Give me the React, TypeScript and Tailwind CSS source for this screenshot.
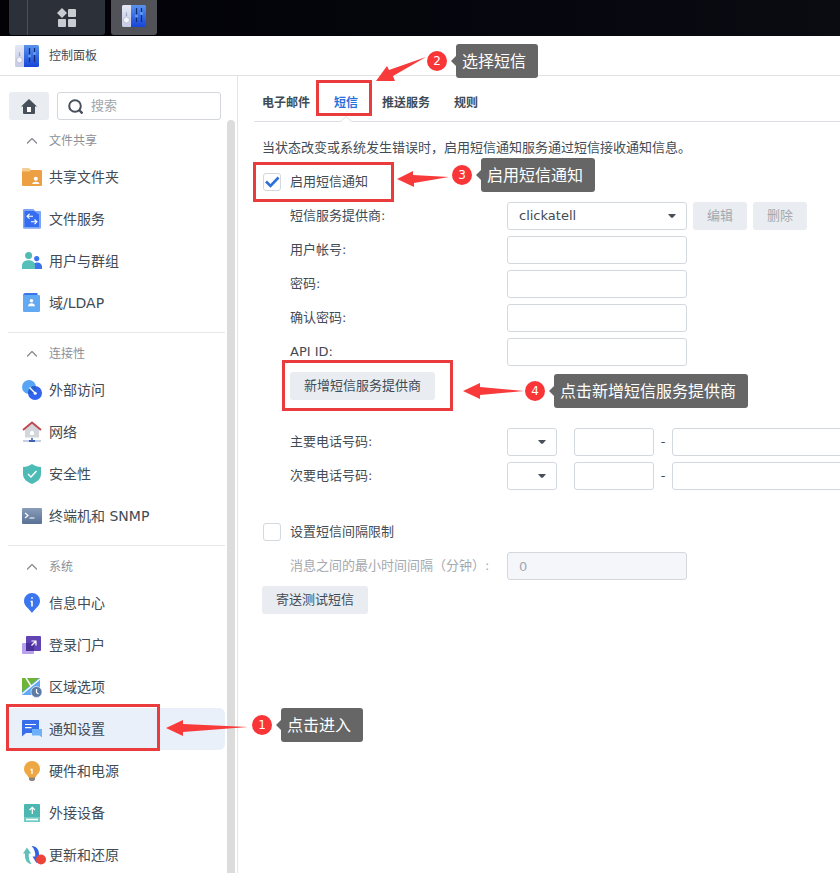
import { useState } from 'react';
import type { ReactNode } from 'react';

// ---------------------------------------------------------------------------
// Icons
// ---------------------------------------------------------------------------

function Icon({ children }: { children: ReactNode }) {
  return (
    <svg viewBox="0 0 20 20" className="h-5 w-5 shrink-0 overflow-visible" aria-hidden>
      {children}
    </svg>
  );
}

function ControlPanelIcon({ id }: { id: string }) {
  return (
    <svg viewBox="0 0 24 22" className="h-[22px] w-6 shrink-0" aria-hidden>
      <defs>
        <linearGradient id={`${id}-l`} x1="0" y1="0" x2="0" y2="1">
          <stop offset="0" stopColor="#e4e7f6" />
          <stop offset="1" stopColor="#c6cbe4" />
        </linearGradient>
        <linearGradient id={`${id}-r`} x1="0" y1="0" x2="0" y2="1">
          <stop offset="0" stopColor="#5a93ea" />
          <stop offset="1" stopColor="#1546d8" />
        </linearGradient>
      </defs>
      <path d="M1.500 0H9v22H1.500A1.500 1.500 0 0 1 0 20.500V1.500A1.500 1.500 0 0 1 1.500 0Z" fill={`url(#${id}-l)`} />
      <path d="M9 0h13.500A1.500 1.500 0 0 1 24 1.500v19a1.500 1.500 0 0 1-1.500 1.500H9Z" fill={`url(#${id}-r)`} />
      <circle cx="4.500" cy="15" r="3" fill="#f4f5fc" stroke="#aab0cc" strokeWidth="0.700" />
      <path d="M4.500 7v4M3.500 10h2" stroke="#9aa1be" strokeWidth="0.800" />
      <path d="M14.500 3v14M19.500 3v14" stroke="#102a78" strokeWidth="1.200" />
      <rect x="13" y="9.500" width="3" height="3" rx="1" fill="#5b9af5" />
      <rect x="18" y="7" width="3" height="3" rx="1" fill="#5b9af5" />
    </svg>
  );
}

const icons = {
  sharedFolder: (
    <Icon>
      <path d="M0 2.200Q0 1 1.200 1H7l2 2h9v3H0Z" fill="#f3cd92" />
      <path d="M0 4.500h7.500L9 3h9.800Q20 3 20 4.200v13.600q0 1.200-1.200 1.200H1.200Q0 19 0 17.800Z" fill="#eda043" />
      <circle cx="13.800" cy="11.800" r="2" fill="#fff" />
      <path d="M10.200 17c0-3 7.200-3 7.200 0Z" fill="#fff" />
    </Icon>
  ),
  fileServices: (
    <Icon>
      <path d="M1 1.200Q1 0 2.200 0h9l2 2H18q1 0 1 1v15.500q0 1.200-1.200 1.200H2.200Q1 19.700 1 18.500Z" fill="#7da4f6" />
      <path d="M2.500 2H12l5 3.500V18H2.500Z" fill="#356df0" />
      <path d="M7.500 5 5 7.300l2.500 2.400M5 7.300h6M12.500 10.500l2.500 2.300-2.500 2.400M15 12.800H9" fill="none" stroke="#fff" strokeWidth="1.100" />
    </Icon>
  ),
  userGroup: (
    <Icon>
      <circle cx="14.700" cy="7.600" r="2.600" fill="#3b74ec" />
      <path d="M11 18v-3c0-5 9-4.500 9 .800V18Z" fill="#3b74ec" />
      <circle cx="6.600" cy="4.500" r="3.500" fill="#52bab5" />
      <path d="M0 18v-3.500C0 7.500 13 7.500 13 14.500V18Z" fill="#56bfba" />
    </Icon>
  ),
  ldap: (
    <Icon>
      <path d="M1 2.500Q1 0 3 0h12.500v4H1Z" fill="#3974ea" />
      <path d="M1 2h15.800Q18 2 18 3.200v14.600q0 1.200-1.200 1.200H2.200Q1 19 1 17.800Z" fill="#62a9f4" />
      <circle cx="9.500" cy="7.800" r="1.800" fill="#fff" />
      <path d="M6 13.200c0-4 7-4 7 0Z" fill="#fff" />
    </Icon>
  ),
  externalAccess: (
    <Icon>
      <circle cx="7" cy="7" r="7" fill="#58a5f5" />
      <circle cx="13" cy="13" r="7" fill="#3265ee" />
      <path d="M6 13a7 7 0 0 1 7-7 7 7 0 0 1 1 1 7 7 0 0 1-7 7 7 7 0 0 1-1-1Z" fill="#2660cf" />
      <path d="m7.500 7.500 5.500 5.500" stroke="#fff" strokeWidth="1.400" />
      <circle cx="13.200" cy="13.200" r="1.500" fill="#fff" />
    </Icon>
  ),
  network: (
    <Icon>
      <path d="M3 7.500 10 1.500l7 6V15.500H3Z" fill="#d3d6da" />
      <path d="M1 8 10 .500 19 8" fill="none" stroke="#c34a55" strokeWidth="2.100" />
      <path d="m10 8.500 2 1.500v3H8v-3Z" fill="#fff" />
      <path d="M1 19h18" stroke="#b2bedb" strokeWidth="1.500" />
      <path d="M10 16v3" stroke="#3c63b6" strokeWidth="1.600" />
      <path d="M7 18h6v2H7Z" fill="#3c63b6" />
    </Icon>
  ),
  security: (
    <Icon>
      <path d="M10 0c3 2 6 3 9 3v7c0 5-4 8-9 10-5-2-9-5-9-10V3c3 0 6-1 9-3Z" fill="#4ebcb6" />
      <path d="m6 10 3 3 5.500-6" fill="none" stroke="#fff" strokeWidth="1.400" />
    </Icon>
  ),
  terminal: (
    <Icon>
      <defs>
        <linearGradient id="terminal-bg" x1="0" y1="0" x2="0" y2="1">
          <stop offset="0" stopColor="#8a9dba" />
          <stop offset="1" stopColor="#587194" />
        </linearGradient>
      </defs>
      <rect y="2" width="20" height="16" rx="1" fill="url(#terminal-bg)" />
      <path d="M3 7l3 2.500L3 12M7.500 12h5" fill="none" stroke="#fff" strokeWidth="1.200" />
    </Icon>
  ),
  infoCenter: (
    <Icon>
      <path d="M10 0a8 8 0 0 1 8 8c0 5-4.500 7-8 12C6.500 15 2 13 2 8a8 8 0 0 1 8-8Z" fill="#3b76ee" />
      <path d="M8.500 8.500H10v5M9.200 5h1.600" fill="none" stroke="#fff" strokeWidth="1.600" />
    </Icon>
  ),
  loginPortal: (
    <Icon>
      <rect y="8" width="12" height="11" rx="1" fill="#b7a1ea" />
      <rect x="4" y="1" width="15" height="15" rx="1" fill="#6243b4" />
      <path d="M4 8h8v8H4Z" fill="#49309b" />
      <path d="m9.500 10.500 4-4M9.500 6h4.500v4.500" fill="none" stroke="#fff" strokeWidth="1.200" />
    </Icon>
  ),
  regional: (
    <Icon>
      <path d="M0 1h18v17H0Z" fill="#62a8f3" />
      <path d="M0 1h17L0 15Z" fill="#6fb339" />
      <path d="m0 17 18-15M4 1l5 8" stroke="#f5f9f5" strokeWidth="1.500" />
      <circle cx="14.500" cy="15" r="5.500" fill="#5c7ca6" stroke="#fff" strokeWidth="0.600" />
      <path d="M14.500 12v3.500l2 1.500" fill="none" stroke="#fff" strokeWidth="1.200" />
    </Icon>
  ),
  notification: (
    <Icon>
      <path d="M1 1h15.500q.500 0 .500.500v12q0 .500-.500.500H4l-4 3.500V2q0-1 1-1Z" fill="#396eea" />
      <path d="M3 5.500h11M3 8.700h6.500" stroke="#fff" strokeWidth="1.200" />
      <path d="M10 10h10v8.500L17.500 16.500H10Z" fill="#6db2f8" />
    </Icon>
  ),
  hardware: (
    <Icon>
      <path d="M7 15h6v3.500L11.500 20h-3L7 18.500Z" fill="#8d8680" />
      <path d="M10 0a8 8 0 0 1 8 8c0 4-3 5-4.500 8.500h-7C5 13 2 12 2 8a8 8 0 0 1 8-8Z" fill="#eda843" />
      <path d="M8.500 8.500H10V13" fill="none" stroke="#fff" strokeWidth="1.300" />
    </Icon>
  ),
  externalDevices: (
    <Icon>
      <rect x="2" y="1" width="16" height="18" rx="1" fill="#4cb7b0" />
      <path d="M2 14h16v4q0 1-1 1H3q-1 0-1-1Z" fill="#73cbc5" />
      <path d="M10.300 11V4.500M7.500 7l2.800-2.700L13 7" fill="none" stroke="#fff" strokeWidth="1.200" />
      <path d="M4 16.500h12" stroke="#fff" strokeWidth="1.600" />
    </Icon>
  ),
  update: (
    <Icon>
      <path d="M1 8.500 5 2.500l4 6H6.800c-.300 4 .200 7 2.700 10.500C4.500 18.500 2.500 14 3 8.500Z" fill="#62c0ba" />
      <path d="M9.500 1c5.500.200 8 4 7.500 10.500h2.500l-5 6.500-4-6.500h2.700c.400-4-.700-7.500-3.700-10.500Z" fill="#2f63e6" />
      <circle cx="19" cy="14.500" r="5" fill="#ee433b" />
    </Icon>
  ),
};

function Caret() {
  return (
    <svg viewBox="0 0 8 4" className="pointer-events-none absolute right-[11px] top-3 h-1 w-2" aria-hidden>
      <path d="M0 0h8L5 3.500q-1 .700-2 0Z" fill="#484f59" />
    </svg>
  );
}

// ---------------------------------------------------------------------------
// Sidebar
// ---------------------------------------------------------------------------

const groups = [
  {
    title: '文件共享',
    items: [
      { label: '共享文件夹', icon: icons.sharedFolder },
      { label: '文件服务', icon: icons.fileServices },
      { label: '用户与群组', icon: icons.userGroup },
      { label: '域/LDAP', icon: icons.ldap },
    ],
  },
  {
    title: '连接性',
    items: [
      { label: '外部访问', icon: icons.externalAccess },
      { label: '网络', icon: icons.network },
      { label: '安全性', icon: icons.security },
      { label: '终端机和 SNMP', icon: icons.terminal },
    ],
  },
  {
    title: '系统',
    items: [
      { label: '信息中心', icon: icons.infoCenter },
      { label: '登录门户', icon: icons.loginPortal },
      { label: '区域选项', icon: icons.regional },
      { label: '通知设置', icon: icons.notification },
      { label: '硬件和电源', icon: icons.hardware },
      { label: '外接设备', icon: icons.externalDevices },
      { label: '更新和还原', icon: icons.update },
    ],
  },
];

function Sidebar() {
  const [active, setActive] = useState('通知设置');

  return (
    <aside className="flex w-[238px] shrink-0 flex-col border-r border-[#e3e5e8]">
      <div className="flex shrink-0 gap-2 pl-[9px] pr-4 pt-4">
        <button type="button" aria-label="主页" className="flex h-7 w-10 items-center justify-center rounded-[3px] bg-[#e9edf1]">
          <svg viewBox="0 0 16 15" className="h-[15px] w-4" aria-hidden>
            <path d="M8 0 0 7.500h2V14q0 1 1 1h10q1 0 1-1V7.500h2Z" fill="#464f5a" />
            <rect x="6" y="8" width="4" height="5" fill="#fff" />
          </svg>
        </button>
        <label className="flex h-7 min-w-0 flex-1 items-center gap-2 rounded-[3px] border border-[#d3d7dc] pl-2.5">
          <svg viewBox="0 0 15 15" className="h-[15px] w-[15px] shrink-0" fill="none" stroke="#464f5a" strokeWidth="2" aria-hidden>
            <circle cx="7" cy="7" r="5.800" />
            <path d="m11 11 3.500 3.500" strokeWidth="2.400" />
          </svg>
          <input type="text" aria-label="搜索" placeholder="搜索" className="min-w-0 flex-1 text-[13px] leading-5 outline-none placeholder:text-[#a0a5ab]" />
        </label>
      </div>
      <div className="flex min-h-0 flex-1 gap-0.5 overflow-hidden">
        <nav className="min-w-0 flex-1 pl-2 pt-1">
          {groups.map((group, i) => (
            <section key={group.title} className={i > 0 ? 'mt-2 border-t border-[#e6e8ea] pt-1' : ''}>
              <button type="button" aria-expanded="true" className="flex h-8 w-full items-center gap-3 pl-[19px] pt-px text-xs text-[#8b9097]">
                <svg viewBox="0 0 10 6" className="h-1.5 w-2.5" fill="none" stroke="currentColor" strokeWidth="1.400" aria-hidden>
                  <path d="m0 5.500 5-5 5 5" />
                </svg>
                {group.title}
              </button>
              {group.items.map((item) => (
                <a
                  key={item.label}
                  href="#"
                  onClick={() => setActive(item.label)}
                  className={`flex h-[42px] items-center gap-[7px] rounded-md pl-3.5 text-sm text-[#414b55] ${active === item.label ? 'bg-[#eaf0fa]' : ''}`}
                >
                  {item.icon}
                  {item.label}
                </a>
              ))}
            </section>
          ))}
        </nav>
        <div className="mr-0.5 w-2 rounded-t bg-[#dcdcdc]" />
      </div>
    </aside>
  );
}

// ---------------------------------------------------------------------------
// SMS form
// ---------------------------------------------------------------------------

const fieldClass = 'h-7 rounded-[3px] border border-[#d3d8dd] bg-white px-[11px] text-[13px] text-[#414b55] outline-none';
const buttonClass = 'h-7 rounded-[3px] bg-[#e9edf1] px-3.5 text-[13px] text-[#414b55] disabled:text-[#a3a9b0]';

const tabs = ['电子邮件', '短信', '推送服务', '规则'];

function Checkbox({ id, label, defaultChecked }: { id: string; label: string; defaultChecked?: boolean }) {
  return (
    <div className="flex h-7 items-center gap-[9px]">
      <span className="relative ml-px h-[18px] w-[18px]">
        <input id={id} type="checkbox" defaultChecked={defaultChecked} className="peer block h-[18px] w-[18px] appearance-none rounded-[3px] border border-[#d3d8dd]" />
        <svg viewBox="0 0 18 18" className="pointer-events-none absolute inset-0 hidden peer-checked:block" fill="none" stroke="#2d6fd8" strokeWidth="2.600" aria-hidden>
          <path d="m3 8.500 4.500 4.500 8-8.500" />
        </svg>
      </span>
      <label htmlFor={id}>{label}</label>
    </div>
  );
}

function TextRow({ id, label }: { id: string; label: string }) {
  return (
    <div className="flex h-7 items-center pl-7">
      <label htmlFor={id} className="w-[217px] shrink-0">{label}</label>
      <input id={id} type="text" className={`w-[180px] ${fieldClass}`} />
    </div>
  );
}

function PhoneRow({ id, label }: { id: string; label: string }) {
  return (
    <div className="flex h-7 items-center pl-7">
      <label htmlFor={id} className="w-[217px] shrink-0">{label}</label>
      <span className="relative mr-[17px] w-[50px] shrink-0">
        <select id={id} className={`block w-full appearance-none ${fieldClass}`}>
          <option value="" />
        </select>
        <Caret />
      </span>
      <input type="text" aria-label={`${label} 区号`} className={`w-20 shrink-0 ${fieldClass}`} />
      <span className="w-[18px] shrink-0 text-center">-</span>
      <input type="text" aria-label={`${label} 号码`} className={`w-[180px] shrink-0 ${fieldClass}`} />
    </div>
  );
}

function SmsSettings() {
  const [tab, setTab] = useState('短信');

  return (
    <main className="min-w-0 flex-1 overflow-hidden pl-4 text-[13px] text-[#414b55]">
      <div role="tablist" className="flex h-[46px] items-end border-b border-[#dcdfe3]">
        {tabs.map((name, i) => (
          <button
            key={name}
            type="button"
            role="tab"
            aria-selected={tab === name}
            onClick={() => setTab(name)}
            className={`relative h-9 pr-3 text-xs font-bold ${i === 0 ? 'pl-2' : 'pl-3'} ${tab === name ? 'text-[#2a70dc]' : ''}`}
          >
            {name}
            {tab === name && (
              <svg viewBox="0 0 12 6" className="absolute -bottom-px left-1/2 -ml-1.5 h-1.5 w-3" aria-hidden>
                <path d="M0 6 6 .500 12 6" fill="#fff" stroke="#dcdfe3" />
              </svg>
            )}
          </button>
        ))}
      </div>

      <form className="flex flex-col gap-1.5 pl-2 pt-3">
        <p className="h-7 whitespace-nowrap leading-7">当状态改变或系统发生错误时，启用短信通知服务通过短信接收通知信息。</p>
        <Checkbox id="enable" label="启用短信通知" defaultChecked />
        <div className="flex h-7 items-center pl-7">
          <label htmlFor="provider" className="w-[217px] shrink-0">短信服务提供商:</label>
          <span className="relative mr-1.5 w-[180px] shrink-0">
            <select id="provider" className={`block w-full appearance-none ${fieldClass}`}>
              <option>clickatell</option>
            </select>
            <Caret />
          </span>
          <button type="button" disabled className={`mr-1.5 shrink-0 ${buttonClass}`}>编辑</button>
          <button type="button" disabled className={`shrink-0 ${buttonClass}`}>删除</button>
        </div>
        <TextRow id="account" label="用户帐号:" />
        <TextRow id="password" label="密码:" />
        <TextRow id="confirm" label="确认密码:" />
        <TextRow id="api" label="API ID:" />
        <div className="pl-7">
          <button type="button" className={`block ${buttonClass}`}>新增短信服务提供商</button>
        </div>
        <div className="mt-[22px] flex flex-col gap-1.5">
          <PhoneRow id="primary" label="主要电话号码:" />
          <PhoneRow id="secondary" label="次要电话号码:" />
        </div>
        <div className="mt-[22px] flex flex-col items-start gap-1.5">
          <Checkbox id="limit" label="设置短信间隔限制" />
          <div className="flex h-7 items-center pl-7 text-[#a3a9b0]">
            <label htmlFor="interval" className="w-[217px] shrink-0">消息之间的最小时间间隔（分钟）:</label>
            <input id="interval" type="text" disabled defaultValue="0" className="h-7 w-[180px] rounded-[3px] border border-[#d3d8dd] bg-[#f4f6fa] px-[11px] text-[13px] text-[#a3a9b0]" />
          </div>
          <button type="button" className={buttonClass}>寄送测试短信</button>
        </div>
      </form>
    </main>
  );
}

// ---------------------------------------------------------------------------
// Step annotations, drawn over the page
// ---------------------------------------------------------------------------

const steps = [
  {
    text: '点击进入',
    box: 'left-[6px] top-[704px] h-[47px] w-[154px]',
    arrow: 'left-[166px] top-[720px] h-4 w-[82px]',
    viewBox: '0 0 82 16',
    points: '0,8 17,0 17,4 82,7 17,12 17,16',
    note: 'left-[252px] top-[708px]',
  },
  {
    text: '选择短信',
    box: 'left-[316px] top-[80px] h-9 w-14',
    arrow: 'left-[376px] top-[57px] h-6 w-[50px]',
    viewBox: '0 0 50 24',
    points: '0,24 11,9 13,13 50,0 17,19 19,24',
    note: 'left-[427px] top-[44px]',
  },
  {
    text: '启用短信通知',
    box: 'left-[253px] top-[162px] h-10 w-[141px]',
    arrow: 'left-[397px] top-[171px] h-4 w-[52px]',
    viewBox: '0 0 52 16',
    points: '0,8 16,0 16,4 52,6 17,12 17,16',
    note: 'left-[452px] top-[158px]',
  },
  {
    text: '点击新增短信服务提供商',
    box: 'left-[282px] top-[360px] h-[51px] w-[171px]',
    arrow: 'left-[463px] top-[383px] h-4 w-[61px]',
    viewBox: '0 0 61 16',
    points: '0,8 17,0 17,4 61,8 17,12 17,16',
    note: 'left-[525px] top-[374px]',
  },
];

function Annotations() {
  return (
    <div className="pointer-events-none absolute inset-0 overflow-hidden">
      {steps.map((step, i) => (
        <div key={step.text}>
          <div className={`absolute border-3 border-[#ea3b3d] ${step.box}`} />
          <svg viewBox={step.viewBox} className={`absolute ${step.arrow}`} aria-hidden>
            <polygon points={step.points} fill="#f93a3b" />
          </svg>
          <div className={`absolute flex items-center ${step.note}`}>
            <span className="flex h-5 w-5 items-center justify-center rounded-full bg-[#f93537] text-xs text-white">{i + 1}</span>
            <svg viewBox="0 0 5 10" className="ml-1 h-2.5 w-[5px]" aria-hidden>
              <path d="M5 0v10L0 5Z" fill="#666" />
            </svg>
            <span className="h-[34px] whitespace-nowrap rounded-[3px] bg-[#666] pl-1.5 pr-3 text-base leading-9 text-white">{step.text}</span>
          </div>
        </div>
      ))}
    </div>
  );
}

export default function App() {
  return (
    <div className="relative flex h-screen flex-col overflow-hidden bg-white font-['DejaVu_Sans','Noto_Sans_CJK_SC',sans-serif]">
      <div className="flex h-9 shrink-0 gap-1.5 bg-linear-to-r from-[#020207] to-[#0a0c12] pb-px pl-[9px]">
        <div className="flex w-24 rounded-b-[3px] bg-[#2c3039]">
          <div className="w-[19px] border-r border-[#4b4f57]" />
          <button type="button" aria-label="主菜单" className="flex flex-1 items-center justify-center">
            <svg viewBox="0 0 18 18" className="h-[18px] w-[18px] overflow-visible" fill="#c9ccd1" aria-hidden>
              <path d="m4-1 5 5-5 5-5-5Z" />
              <rect x="10" width="8" height="8" rx="1" />
              <rect y="10" width="8" height="8" rx="1" />
              <rect x="10" y="10" width="8" height="8" rx="1" />
            </svg>
          </button>
        </div>
        <button type="button" aria-label="控制面板" className="flex w-[46px] items-start justify-center rounded-b-[3px] bg-[#515359] pt-[5px]">
          <ControlPanelIcon id="task" />
        </button>
      </div>
      <header className="flex h-10 shrink-0 items-center gap-2.5 border-b border-[#dfe2e5] pl-[15px]">
        <ControlPanelIcon id="title" />
        <h1 className="text-xs text-[#414b55]">控制面板</h1>
      </header>
      <div className="flex min-h-0 flex-1">
        <Sidebar />
        <SmsSettings />
      </div>
      <Annotations />
    </div>
  );
}
